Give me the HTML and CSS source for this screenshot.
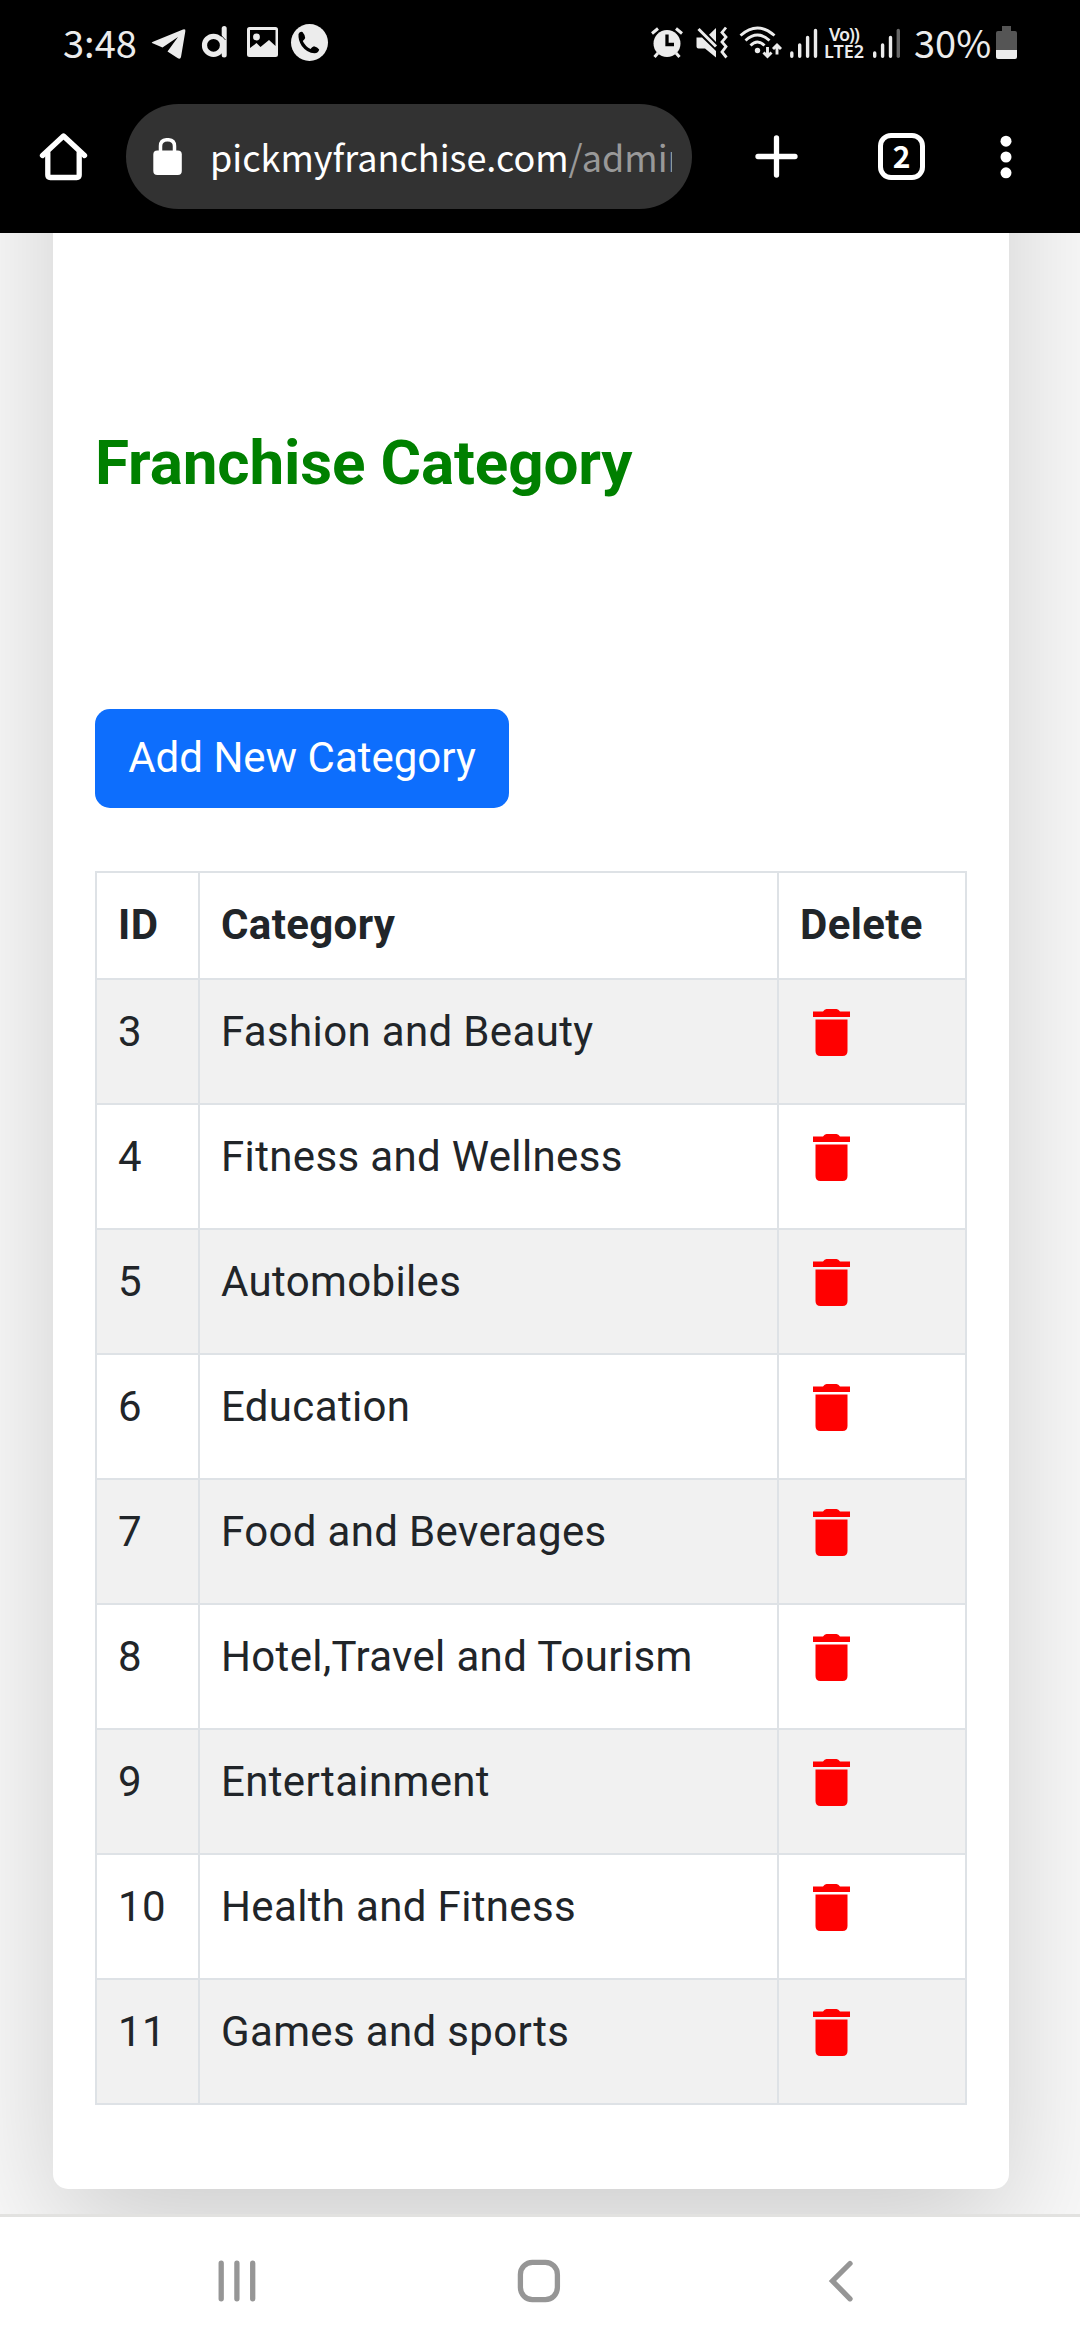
FILE: index.html
```html
<!DOCTYPE html>
<html lang="en">
<head>
<meta charset="utf-8">
<title>Franchise Category</title>
<link rel="stylesheet" href="styles.css">
</head>
<body>
<svg class="defs" width="0" height="0">
  <symbol id="trash" viewBox="0 0 38 48">
    <path d="M10 2.5Q11.5 0 13.500 0H23.500Q25.500 0 27 2.500H37V8H0V2.500ZM2.500 10.500H34.500V42Q34.500 47 29.500 47H7.500Q2.500 47 2.500 42Z"/>
  </symbol>
</svg>
<header class="top">
  <div class="status">
    <div class="group">
      <span class="clock">3:48</span>
      <svg class="telegram" width="38" height="36" viewBox="150 26 38 36"><path d="M152 43Q151 42.500 153 41.700L183 29.400Q186 28.500 185.300 31.500L181 57Q180.300 59.800 177.500 58L167.500 51.500L178 37L162.500 47.500Z"/></svg>
      <svg class="d-app" width="30" height="36" viewBox="200 26 30 36" fill="none"><circle cx="213.500" cy="45.300" r="9" stroke="#ececec" stroke-width="5.200"/><path d="M224.200 28.500V55" stroke="#ececec" stroke-width="5" stroke-linecap="round"/><path d="M220.500 34.500L225.500 40" stroke="#000" stroke-width=".8"/></svg>
      <svg class="photo" width="34" height="36" viewBox="246 26 34 36"><path fill-rule="evenodd" d="M249.500 27H275.500Q278 27 278 29.500V54.500Q278 57 275.500 57H249.500Q247 57 247 54.500V29.500Q247 27 249.500 27ZM250 30V48L256.500 43L260.500 47L269 40L275.500 46V30Z"/><circle cx="256.500" cy="37" r="3.400"/></svg>
      <svg class="phone" width="40" height="40" viewBox="290 23 40 40"><circle cx="309.500" cy="42.500" r="18.500"/><path fill="#000" d="M298.500 34Q300 31 302.500 32Q304.500 34 305.200 38Q304.500 39.500 302.800 41Q305 46 310.500 49Q312 47 314 46.300Q317.500 47 319.200 49.500Q318.500 53 314.500 53.300Q307 53 301.800 46Q298 40 298.500 34Z"/></svg>
    </div>
    <div class="group">
      <svg class="alarm" width="34" height="36" viewBox="650 26 34 36"><circle cx="667" cy="43.500" r="13.500"/><path d="M652 33.500L658 28.500M682 33.500L676 28.500M658 53L654.500 57M676 53L679.500 57" stroke="#ececec" stroke-width="3"/><path d="M667 34.500V44.500H674" fill="none" stroke="#000" stroke-width="3.300"/></svg>
      <svg class="mute" width="34" height="36" viewBox="695 26 34 36"><path d="M696.500 37.500H702L716 51V57.500L705 48.500H698.500Q696.500 48.500 696.500 46.500ZM716 28V42L709 34.800Z"/><path d="M698.500 29L716 46.500" stroke="#ececec" stroke-width="3"/><path d="M726 27.500L722 32.500L726 37L722 42L726 46.500L722 52L726.500 57.500" fill="none" stroke="#ececec" stroke-width="2.800"/></svg>
      <svg class="wifi" width="44" height="36" viewBox="739 26 44 36"><g fill="none" stroke="#ececec" stroke-width="2.900"><path d="M740.500 35.500Q757.500 20.500 774.500 35.500M745.500 40.500Q757.500 29.500 769.500 40.500M750.500 45.500Q757.500 38.500 764.500 45.500"/><path d="M767.500 47V56M763.500 52.500L767.500 56.500L771.500 52.500M777 54.500V46M773 49L777 45L781 49"/></g><circle cx="757.500" cy="50.500" r="2.700"/></svg>
      <svg class="signal" width="30" height="36" viewBox="789 26 30 36" stroke="#ececec" stroke-width="3.400" stroke-linecap="round"><path d="M791.800 53V56.300M799.700 45V56.300M807.600 37.500V56.300M815.500 30.500V56.300"/></svg>
      <span class="volte"><b class="vo">Vo))</b><b>LTE2</b></span>
      <svg class="signal2" width="30" height="36" viewBox="872 26 30 36" stroke="#ececec" stroke-width="3.400" stroke-linecap="round"><path d="M874.700 53V56.300M882.600 45V56.300M890.500 37.500V56.300"/><path stroke="#666" d="M898.300 30.500V56.300"/></svg>
      <span class="percent">30%</span>
      <svg class="battery" width="24" height="36" viewBox="995 26 24 36"><path fill="#555" d="M1002 26H1011V31H1015Q1017 31 1017 33V50H996V33Q996 31 998 31H1002Z"/><path d="M996 50H1017V57Q1017 59 1015 59H998Q996 59 996 57Z"/></svg>
    </div>
  </div>
  <div class="toolbar">
    <svg class="home" width="50" height="50" viewBox="38 132 50 50" fill="none" stroke="#fff" stroke-width="5.300" stroke-linecap="round" stroke-linejoin="round"><path d="M42.500 155.500L63.500 136L84.500 155.500" /><path d="M47.800 153V175Q47.800 177.500 50.300 177.500H76.700Q79.200 177.500 79.200 175V153"/></svg>
    <div class="address">
      <svg width="30" height="38" viewBox="153 137 30 38"><rect x="153.300" y="149.500" width="28.500" height="24.500" rx="4" fill="#fff"/><path d="M160.500 151V145Q160.500 138.700 167.500 138.700T174.500 145V151" fill="none" stroke="#fff" stroke-width="3.500"/></svg>
      <span class="url">pickmyfranchise.com<span class="path">/admin</span></span>
    </div>
    <svg class="plus" width="44" height="44" viewBox="754 135 44 44" stroke="#fff" stroke-width="5.300" stroke-linecap="round"><path d="M758 156.500H795M776.500 138V175"/></svg>
    <span class="tabs">2</span>
    <svg class="more" width="12" height="44" viewBox="1000.500 134.500 12 44" fill="#fff"><circle cx="1006.500" cy="140.700" r="5.500"/><circle cx="1006.500" cy="156.500" r="5.500"/><circle cx="1006.500" cy="172.300" r="5.500"/></svg>
  </div>
</header>
<main class="page">
  <section class="card">
    <h1>Franchise Category</h1>
    <a class="btn">Add New Category</a>
    <table>
      <colgroup><col class="c-id"><col class="c-name"><col class="c-del"></colgroup>
      <thead><tr><th>ID</th><th>Category</th><th>Delete</th></tr></thead>
      <tbody>
        <tr><td>3</td><td>Fashion and Beauty</td><td><svg class="trash"><use href="#trash"/></svg></td></tr>
        <tr><td>4</td><td>Fitness and Wellness</td><td><svg class="trash"><use href="#trash"/></svg></td></tr>
        <tr><td>5</td><td>Automobiles</td><td><svg class="trash"><use href="#trash"/></svg></td></tr>
        <tr><td>6</td><td>Education</td><td><svg class="trash"><use href="#trash"/></svg></td></tr>
        <tr><td>7</td><td>Food and Beverages</td><td><svg class="trash"><use href="#trash"/></svg></td></tr>
        <tr><td>8</td><td>Hotel,Travel and Tourism</td><td><svg class="trash"><use href="#trash"/></svg></td></tr>
        <tr><td>9</td><td>Entertainment</td><td><svg class="trash"><use href="#trash"/></svg></td></tr>
        <tr><td>10</td><td>Health and Fitness</td><td><svg class="trash"><use href="#trash"/></svg></td></tr>
        <tr><td>11</td><td>Games and sports</td><td><svg class="trash"><use href="#trash"/></svg></td></tr>
      </tbody>
    </table>
  </section>
</main>
<nav class="navbar">
  <svg width="44" height="44" viewBox="214.500 2258.500 44 44"><path d="M220.700 2262.700V2298.300M236.400 2262.700V2298.300M252.200 2262.700V2298.300"/></svg>
  <svg width="44" height="44" viewBox="516.500 2258.500 44 44"><rect x="519.900" y="2261.900" width="37" height="37.200" rx="12"/></svg>
  <svg width="44" height="44" viewBox="820 2258.500 44 44"><path d="M850 2263L832.500 2280.500L850 2298.300"/></svg>
</nav>
</body>
</html>
```

FILE: styles.css
```css
* { box-sizing: border-box; }
body {
  margin: 0;
  width: 1080px;
  height: 2340px;
  display: flex;
  flex-direction: column;
  overflow: hidden;
  background: #fff;
  color: #212529;
  font-family: Roboto, "Liberation Sans", sans-serif;
  font-size: 42px;
  line-height: 63px;
}
svg { display: block; flex: none; }
.defs { position: absolute; }

/* system status bar and browser toolbar */
.top {
  height: 233px;
  flex: none;
  background: #000;
  color: #fff;
  font-family: "Noto Sans CJK SC", "Noto Sans", sans-serif;
}
.status {
  height: 104px;
  padding: 0 61px 0 63px;
  display: flex;
  justify-content: space-between;
  color: #ececec;
  fill: #ececec;
}
.group { display: flex; align-items: flex-start; }
.group svg { margin-top: 26px; }
.clock, .percent { font-size: 38px; line-height: 56px; margin-top: 14px; white-space: nowrap; }
.clock { width: 87px; }
.d-app { margin-left: 12px; }
.photo { margin-left: 16px; }
.group .phone { margin: 23px 0 0 10px; }
.mute { margin-left: 11px; }
.wifi { margin-left: 10px; }
.signal { margin-left: 6px; }
.volte {
  display: flex;
  flex-direction: column;
  width: 42px;
  margin: 26px 0 0 5px;
  font-family: "Noto Sans", sans-serif;
  font-size: 18px;
  line-height: 17px;
  white-space: nowrap;
}
.volte b { font-weight: 600; }
.vo { padding-left: 5px; letter-spacing: -1px; }
.signal2 { margin-left: 6px; }
.percent { width: 79px; margin-left: 12px; }
.battery { margin-left: 2px; }

.toolbar { display: flex; align-items: center; height: 105px; }
.home { margin-left: 38px; }
.address {
  width: 566px;
  height: 105px;
  margin-left: 38px;
  padding: 0 20px 0 27px;
  display: flex;
  align-items: center;
  border-radius: 53px;
  background: #323232;
}
.url {
  width: 462px;
  margin: 0 0 2px 27px;
  overflow: hidden;
  white-space: nowrap;
  font-size: 36px;
  line-height: 60px;
}
.path { color: #999; }
.plus { margin-left: 62px; }
.tabs {
  width: 47px;
  height: 47px;
  margin-left: 80px;
  border: 5px solid #fff;
  border-radius: 13px;
  font-size: 30px;
  font-weight: 700;
  line-height: 35px;
  text-align: center;
}
.more { margin-left: 75px; }

/* page */
.page {
  height: 1981px;
  flex: none;
  overflow: hidden;
  background: #f9f9f9;
}
.card {
  height: 2256px;
  margin: -300px 71px 0 53px;
  padding: 490px 42px 0;
  border-radius: 15px;
  background: #fff;
  box-shadow: 0 42px 126px rgba(0, 0, 0, .175);
}
h1 {
  margin: 0 0 207px;
  color: green;
  font-size: 62px;
  line-height: 79px;
  font-weight: 700;
  letter-spacing: -.15px;
}
.btn {
  display: block;
  width: 414px;
  height: 99px;
  border-radius: 15px;
  background: #0d6efd;
  color: #fff;
  line-height: 97px;
  text-align: center;
  white-space: nowrap;
}
table {
  width: 872px;
  margin-top: 63px;
  table-layout: fixed;
  border-spacing: 0;
  border: solid #dee2e6;
  border-width: 2px 0 0 2px;
  letter-spacing: .35px;
}
.c-id { width: 103px; }
.c-name { width: 579px; }
th, td {
  padding: 20px 0 0 21px;
  border: solid #dee2e6;
  border-width: 0 2px 2px 0;
  text-align: left;
  vertical-align: top;
  white-space: nowrap;
}
th { height: 107px; font-weight: 700; }
td { height: 125px; }
tbody tr:nth-child(odd) { background: #f1f1f1; }
.trash { width: 38px; height: 48px; margin: 9px 0 0 13px; fill: #f00; }

/* system navigation */
.navbar {
  height: 126px;
  flex: none;
  display: flex;
  justify-content: space-between;
  padding: 41.500px 216px 0 214.500px;
  border-top: 3px solid #e2e2e0;
  fill: none;
  stroke: #969696;
  stroke-width: 5.300px;
  stroke-linecap: round;
}
```
